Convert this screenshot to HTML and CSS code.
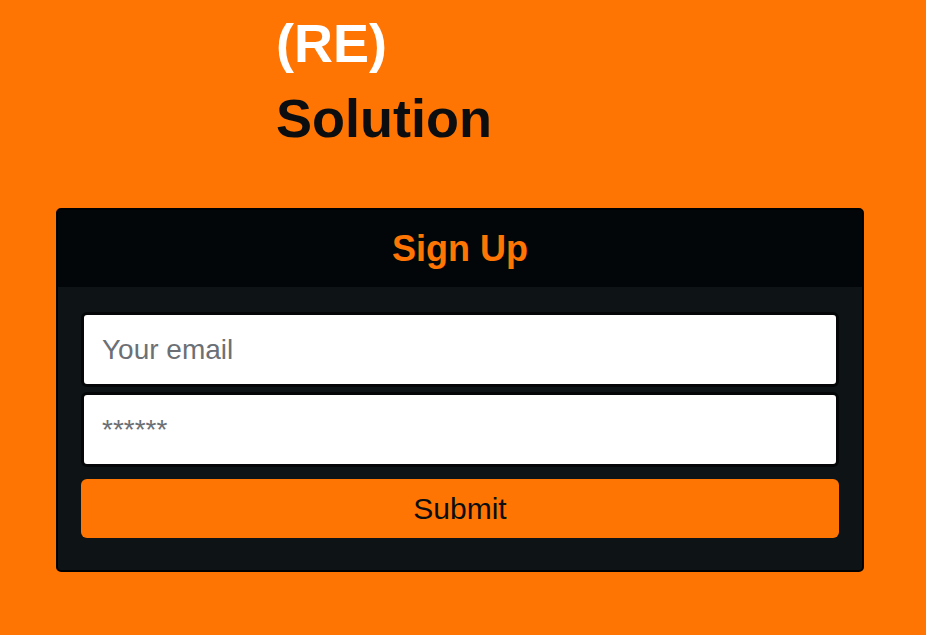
FILE: index.html
```html
<!DOCTYPE html>
<html lang="en">
<head>
<meta charset="utf-8">
<title>(RE) Solution</title>
<link rel="stylesheet" href="styles.css">
</head>
<body>
  <main class="page">
    <h1 class="title">
      <span class="title-re">(RE)</span>
      <span class="title-main">Solution</span>
    </h1>
    <section class="card">
      <header class="card-header">
        <h2 class="card-title">Sign Up</h2>
      </header>
      <form class="card-body">
        <input class="field" type="email" placeholder="Your email">
        <input class="field" type="password" placeholder="******">
        <button class="submit" type="button">Submit</button>
      </form>
    </section>
  </main>
</body>
</html>
```
FILE: styles.css
```css
html, body {
  margin: 0;
  padding: 0;
  background: #fe7504;
  font-family: "Liberation Sans", Arial, sans-serif;
}
.page {
  display: flex;
  flex-direction: column;
  padding: 6px 0 0 56px;
}
.title {
  margin: 0 0 52px 220px;
  font-size: 54px;
  line-height: 75px;
  font-weight: 700;
  display: flex;
  flex-direction: column;
}
.title-re { color: #ffffff; }
.title-main { color: #0b0d0e; }
.card {
  width: 808px;
  box-sizing: border-box;
  border: 2px solid #000000;
  border-radius: 5px;
  background: #0e1315;
  overflow: hidden;
}
.card-header {
  height: 77px;
  background: #030608;
  display: flex;
  align-items: center;
  justify-content: center;
}
.card-title {
  margin: 0;
  color: #fe7504;
  font-size: 36px;
  font-weight: 700;
  position: relative;
  top: 0;
}
.card-body {
  display: flex;
  flex-direction: column;
  padding: 25px 23px 32px 23px;
}
.field {
  height: 75px;
  box-sizing: border-box;
  border: 3px solid #040607;
  border-radius: 6px;
  background: #ffffff;
  padding: 0 15px 0 18px;
  font-family: "Liberation Sans", Arial, sans-serif;
  font-size: 28px;
  color: #222;
  outline: none;
}
.field + .field { margin-top: 5px; }
.field::placeholder { color: #6c7075; }
.submit {
  margin-top: 12px;
  height: 59px;
  border: none;
  border-radius: 6px;
  background: #fe7504;
  color: #0b0d0e;
  font-family: "Liberation Sans", Arial, sans-serif;
  font-size: 30px;
  cursor: pointer;
}
```
